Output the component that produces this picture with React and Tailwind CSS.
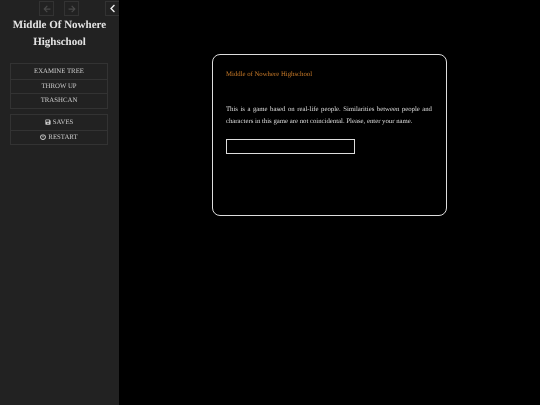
import React from "react";
import { FaArrowLeft, FaArrowRight, FaChevronLeft, FaSave, FaPowerOff } from "react-icons/fa";

const font = "font-['Liberation_Serif',serif]";

const MenuItem = ({ children, first }) => (
  <li className={`h-[14.5px] pt-[1px] flex items-center justify-center gap-[2px] text-[6.8px] text-[#ccc] ${first ? "" : "border-t border-[#333]"}`}>
    {children}
  </li>
);

const App = () => {
  return (
    <div className={`flex w-[540px] h-[405px] overflow-hidden bg-black [text-rendering:geometricPrecision] ${font}`}>
      <aside className="w-[119px] shrink-0 bg-[#222] flex flex-col">
        <div className="h-[16px] flex items-start pt-[1px]">
          <button className="ml-[39px] w-[15px] h-[15px] border border-[#333] flex items-center justify-center text-[#4a4a4a]">
            <FaArrowLeft size={8} />
          </button>
          <button className="ml-[10px] w-[15px] h-[15px] border border-[#333] flex items-center justify-center text-[#4a4a4a]">
            <FaArrowRight size={8} />
          </button>
          <button className="ml-[26px] w-[14px] h-[15px] border border-r-0 border-[#333] flex items-center justify-center text-[#eee]">
            <FaChevronLeft size={9} />
          </button>
        </div>
        <h1 className="mt-[1px] px-[8px] text-center text-[11px] leading-[16.5px] font-bold text-[#e4e4e4] [will-change:transform]">
          Middle Of Nowhere Highschool
        </h1>
        <ul className="mt-[13px] ml-[10px] mr-[11px] border border-[#333] [will-change:transform]">
          <MenuItem first>EXAMINE TREE</MenuItem>
          <MenuItem>THROW UP</MenuItem>
          <MenuItem>TRASHCAN</MenuItem>
        </ul>
        <ul className="mt-[5px] ml-[10px] mr-[11px] border border-[#333] [will-change:transform]">
          <MenuItem first>
            <FaSave size={6} className="-mt-px" />
            SAVES
          </MenuItem>
          <MenuItem>
            <FaPowerOff size={6} className="-mt-px" />
            RESTART
          </MenuItem>
        </ul>
      </aside>
      <main className="flex-1 min-w-0 pt-[54px] pl-[93px]">
        <section className="w-[235px] h-[162px] border border-[#ddd] rounded-[8px] pl-[13px] pr-[14px] pt-[14px] text-[6.75px] leading-[12px] text-[#ddd] [will-change:transform]">
          <p className="text-[#c87a28]">Middle of Nowhere Highschool</p>
          <p className="mt-[23px] text-justify">
            This is a game based on real-life people. Similarities between people and characters in this game are not coincidental. Please, enter your name.
          </p>
          <input
            type="text"
            className="block mt-[11px] w-[129px] h-[15px] border border-[#ddd] bg-black outline-none"
          />
        </section>
      </main>
    </div>
  );
};

export default App;
